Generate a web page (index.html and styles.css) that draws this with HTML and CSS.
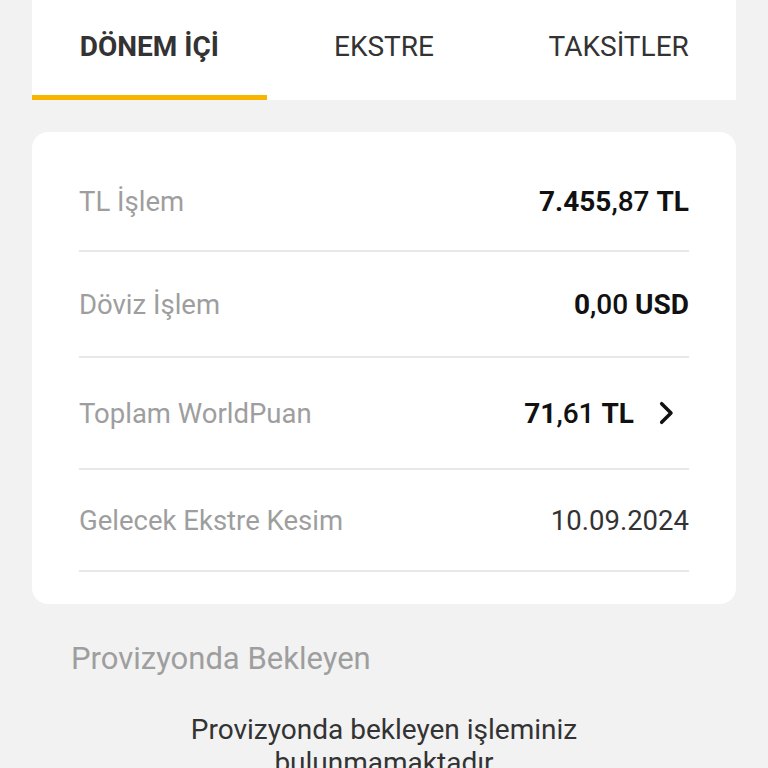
FILE: index.html
```html
<!DOCTYPE html>
<html lang="tr">
<head>
    <meta charset="UTF-8">
    <meta name="viewport" content="width=device-width, initial-scale=1.0">
    <title>Kart Detayı</title>
    <link rel="stylesheet" href="styles.css">
</head>
<body>
    <div class="tabs">
        <div class="tab active">DÖNEM İÇİ</div>
        <div class="tab">EKSTRE</div>
        <div class="tab">TAKSİTLER</div>
    </div>

    <div class="summary">
        <div class="row">
            <span class="label">TL İşlem</span>
            <span class="value"><b>7.455</b>,87 <b>TL</b></span>
        </div>
        <div class="row">
            <span class="label">Döviz İşlem</span>
            <span class="value"><b>0</b>,00 <b>USD</b></span>
        </div>
        <div class="row row-link">
            <span class="label">Toplam WorldPuan</span>
            <span class="value"><b>71</b>,61 <b>TL</b>
                <svg class="chevron" viewBox="0 0 24 24" width="28" height="28"><path d="M10 4l8 8-8 8" fill="none" stroke="#111" stroke-width="3" stroke-linecap="round" stroke-linejoin="round"/></svg>
            </span>
        </div>
        <div class="row">
            <span class="label">Gelecek Ekstre Kesim</span>
            <span class="date">10.09.2024</span>
        </div>
    </div>

    <h2 class="section-title">Provizyonda Bekleyen</h2>
    <p class="empty">Provizyonda bekleyen işleminiz<br>bulunmamaktadır</p>
</body>
</html>
```

FILE: styles.css
```css
* {
    margin: 0;
    padding: 0;
    box-sizing: border-box;
}

body {
    background-color: #f2f2f2;
    font-family: Roboto, "Noto Sans", sans-serif;
    padding: 0 32px;
    color: #222;
}

/* Tabs */
.tabs {
    display: flex;
    background-color: #fff;
    margin-top: -20px;
    padding-top: 20px;
    border-top-left-radius: 16px;
    border-top-right-radius: 16px;
}

.tab {
    flex: 1;
    text-align: center;
    height: 100px;
    padding-top: 30px;
    font-size: 28px;
    color: #333;
    border-bottom: 5px solid transparent;
}

.tab.active {
    font-weight: 700;
    border-bottom-color: #f7b500;
}

/* Summary card */
.summary {
    margin-top: 32px;
    background-color: #fff;
    border-radius: 16px;
    padding: 20px 47px 32px;
}

.row {
    display: flex;
    justify-content: space-between;
    align-items: center;
    height: 100px;
    border-bottom: 2px solid #e8e8e8;
    font-size: 27.5px;
}

.row + .row {
    height: 106px;
}

.row-link {
    height: 112px !important;
}

.row:last-child {
    height: 102px !important;
}

.label {
    color: #9e9e9e;
}

.value {
    display: flex;
    align-items: center;
    color: #111;
    font-size: 28px;
    font-weight: 500;
    white-space: pre;
}

.value b {
    font-weight: 700;
}

.chevron {
    margin-left: 16px;
    margin-right: 11px;
}

.date {
    color: #333;
    font-size: 27.5px;
}

.section-title {
    font-size: 31px;
    font-weight: 400;
    color: #9e9e9e;
    margin-top: 36px;
    padding-left: 39px;
}

.empty {
    text-align: center;
    font-size: 28px;
    line-height: 33px;
    color: #333;
    margin-top: 36px;
}
```
